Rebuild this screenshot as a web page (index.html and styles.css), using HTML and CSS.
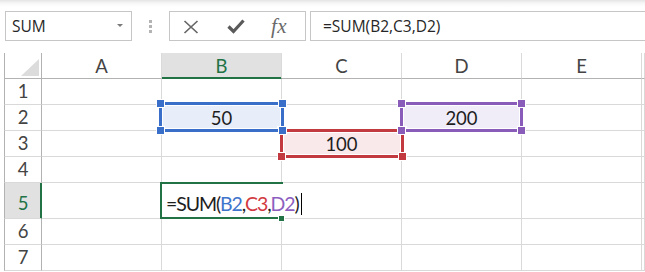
FILE: index.html
```html
<!DOCTYPE html>
<html lang="en">
<head>
<meta charset="utf-8">
<title>Excel SUM</title>
<link rel="stylesheet" href="styles.css">
</head>
<body>
<div class="toolbar">
  <div class="namebox"><span>SUM</span><span class="nb-arrow"></span></div>
  <div class="grip"><i></i><i></i><i></i></div>
  <div class="fbtns">
    <svg class="ic-x" width="16" height="14" viewBox="0 0 16 14"><path d="M1.5 1 L14.5 13 M14.5 1 L1.5 13" stroke="#676767" stroke-width="1.7" fill="none"/></svg>
    <svg class="ic-ok" width="18" height="15" viewBox="0 0 18 15"><path d="M1.5 7.5 L6.5 12.5 L16.5 1.5" stroke="#5a5a5a" stroke-width="3.2" fill="none"/></svg>
    <span class="fx">fx</span>
  </div>
  <div class="finput">=SUM(B2,C3,D2)</div>
</div>
<div class="sheet">
  <div class="c corner"><span class="tri"></span></div>
  <div class="c ch">A</div>
  <div class="c ch sel">B</div>
  <div class="c ch">C</div>
  <div class="c ch">D</div>
  <div class="c ch">E</div>
  <div class="c ch"></div>

  <div class="c rh">1</div><div class="c"></div><div class="c"></div><div class="c"></div><div class="c"></div><div class="c"></div><div class="c"></div>
  <div class="c rh">2</div><div class="c"></div><div class="c v fill-b">50</div><div class="c"></div><div class="c v fill-p">200</div><div class="c"></div><div class="c"></div>
  <div class="c rh">3</div><div class="c"></div><div class="c"></div><div class="c v fill-r">100</div><div class="c"></div><div class="c"></div><div class="c"></div>
  <div class="c rh">4</div><div class="c"></div><div class="c"></div><div class="c"></div><div class="c"></div><div class="c"></div><div class="c"></div>
  <div class="c rh sel">5</div><div class="c"></div><div class="c edit"><span>=SUM(</span><span class="ref-b">B2</span><span>,</span><span class="ref-r">C3</span><span>,</span><span class="ref-p">D2</span><span>)</span><span class="caret"></span></div><div class="c"></div><div class="c"></div><div class="c"></div>
  <div class="c rh">6</div><div class="c"></div><div class="c"></div><div class="c"></div><div class="c"></div><div class="c"></div><div class="c"></div>
  <div class="c rh">7</div><div class="c"></div><div class="c"></div><div class="c"></div><div class="c"></div><div class="c"></div><div class="c"></div>

  <div class="rng rng-red"><i class="hd tl"></i><i class="hd tr"></i><i class="hd bl"></i><i class="hd br"></i></div>
  <div class="rng rng-blue"><i class="hd tl"></i><i class="hd tr"></i><i class="hd bl"></i><i class="hd br"></i></div>
  <div class="rng rng-purple"><i class="hd tl"></i><i class="hd tr"></i><i class="hd bl"></i><i class="hd br"></i></div>
  <div class="active"><i class="fillh"></i></div>
</div>
</body>
</html>
```
FILE: styles.css
```css
* { box-sizing: border-box; }
html, body { margin: 0; padding: 0; background: #fff; }
body { width: 645px; height: 272px; overflow: hidden; font-family: "Open Sans", "Noto Sans", sans-serif; }

.toolbar {
  height: 53px;
  display: flex;
  align-items: flex-start;
  padding: 11px 0 0 5px;
  background: linear-gradient(#e4e4e4 0px, #f6f6f6 3px, #fff 7px);
}
.namebox {
  width: 127px; height: 30px;
  border: 1px solid #c6c6c6;
  background: #fff;
  display: flex; align-items: center; justify-content: space-between;
  padding: 0 8px 0 6px;
  font-size: 15.5px; color: #262626;
}
.nb-arrow {
  width: 0; height: 0;
  border-left: 3px solid transparent;
  border-right: 3px solid transparent;
  border-top: 3px solid #7a7a7a;
  margin-top: -1px;
}
.grip {
  margin: 9px 0 0 17px;
  display: flex; flex-direction: column; gap: 2px;
}
.grip i { display: block; width: 3px; height: 3px; background: #b3b3b3; }
.fbtns {
  margin-left: 17px;
  width: 137px; height: 30px;
  border: 1px solid #c6c6c6;
  background: #fff;
  display: flex; align-items: center;
  padding-left: 13px;
}
.ic-x { display: block; margin-top: 1px; }
.ic-ok { display: block; margin-left: 28px; margin-top: 1px; }
.fx {
  margin-left: 26px;
  font-family: "Liberation Serif", serif;
  font-style: italic;
  font-size: 21px;
  color: #6a6a6a;
  line-height: 1;
  letter-spacing: 0.5px;
}
.finput {
  flex: 1;
  margin-left: 4px;
  height: 30px;
  border: 1px solid #c6c6c6;
  border-right: none;
  background: #fff;
  display: flex; align-items: center;
  padding-left: 12px;
  font-size: 15.5px; color: #262626;
}

.sheet {
  position: relative;
  margin-left: 4px;
  display: grid;
  grid-template-columns: 38px repeat(5, 120px) 1fr;
  grid-template-rows: 26px 26px 26px 26px 26px 36px 26px 26px;
  font-family: "Lato", "Open Sans", sans-serif;
  font-size: 18.5px;
  color: #1e1e1e;
}
.c {
  border-right: 1px solid #d9d9d9;
  border-bottom: 1px solid #d9d9d9;
  display: flex; align-items: center; justify-content: center;
  line-height: 1;
}
.corner {
  border-left: 1px solid #b2b2b2;
  border-right: 1px solid #b2b2b2;
  border-bottom: 1px solid #b2b2b2;
  align-items: flex-end; justify-content: flex-end;
  padding: 0 2px 2px 0;
}
.tri {
  width: 18px; height: 17px;
  background: #dcdcdc;
  clip-path: polygon(100% 0, 100% 100%, 0 100%);
}
.ch {
  border-bottom: 1px solid #b2b2b2;
  border-right: 1px solid #dadada;
  color: #444;
  padding-top: 1px;
}
.ch.sel {
  background: #e1e1e1;
  color: #217346;
  border-bottom-color: #217346;
  box-shadow: inset 0 -1px 0 #217346;
}
.rh {
  border-left: 1px solid #b2b2b2;
  border-right: 1px solid #b2b2b2;
  color: #444;
}
.rh.sel {
  background: #e1e1e1;
  color: #217346;
  border-right-color: #217346;
  box-shadow: inset -1px 0 0 #217346;
  align-items: flex-end;
  padding-bottom: 6px;
}
.v { padding-top: 1px; }
.fill-b { background: #e8eef9; }
.fill-r { background: #f9e9ea; }
.fill-p { background: #f0edf8; }

.edit {
  grid-column: span 2;
  justify-content: flex-start;
  align-items: flex-end;
  padding: 0 0 5px 4px;
  font-size: 19.5px;
  letter-spacing: -1.1px;
  color: #1e1e1e;
  white-space: nowrap;
}
.ref-b { color: #3d74cc; }
.ref-r { color: #d23a3f; }
.ref-p { color: #8d5ec0; }
.caret {
  display: inline-block;
  width: 1px; height: 22px;
  background: #000;
  margin-left: 2px;
  margin-bottom: -2px;
  align-self: flex-end;
}

.rng {
  position: absolute;
  border: 3px solid;
  box-shadow: inset 0 0 0 1px #fff;
}
.rng-blue { left: 155px; top: 49px; width: 125px; height: 30px; border-color: #3a6fc9; }
.rng-red { left: 276px; top: 76px; width: 124px; height: 29px; border-color: #c2393f; }
.rng-purple { left: 396px; top: 49px; width: 123px; height: 30px; border-color: #8a5cba; }
.hd {
  position: absolute;
  width: 7px; height: 7px;
  box-shadow: 0 0 0 1px #fff;
}
.rng-blue .hd { background: #3a6fc9; }
.rng-red .hd { background: #c2393f; }
.rng-purple .hd { background: #8a5cba; }
.hd.tl { left: -5px; top: -5px; }
.hd.tr { right: -5px; top: -5px; }
.hd.bl { left: -5px; bottom: -5px; }
.hd.br { right: -5px; bottom: -5px; }

.active {
  position: absolute;
  left: 156px; top: 129px; width: 123px; height: 37px;
  border-top: 2px solid #217346;
  border-left: 2px solid #217346;
  border-bottom: 2px solid #217346;
}
.fillh {
  position: absolute;
  right: -1px; bottom: -4px;
  width: 5px; height: 5px;
  background: #217346;
  box-shadow: 0 0 0 1px #fff;
}
```
